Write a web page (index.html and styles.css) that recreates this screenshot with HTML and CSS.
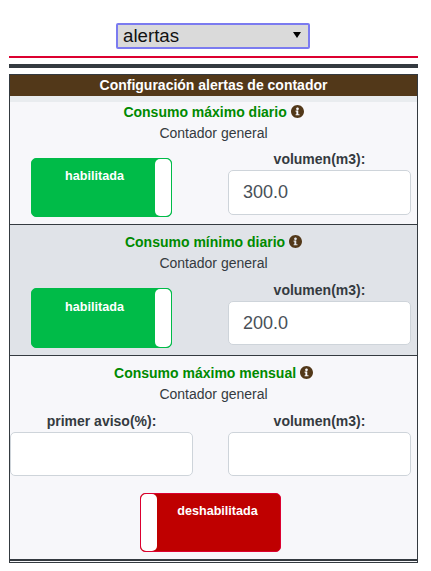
FILE: index.html
```html
<!DOCTYPE html>
<html lang="es">
<head>
    <meta charset="UTF-8">
    <meta name="viewport" content="width=device-width, initial-scale=1.0">
    <title>Alertas</title>
    <link rel="stylesheet" href="styles.css">
</head>
<body>
    <svg class="icon-defs" width="0" height="0">
        <symbol id="info" viewBox="0 0 512 512">
            <path fill-rule="evenodd" d="M256 0C115 0 0 115 0 256s115 256 256 256 256-115 256-256S397 0 256 0zm0 96c31 0 54 24 54 54s-23 54-54 54-54-24-54-54 23-54 54-54zm78 312H182v-46h30v-96h-30v-46h104v142h48v46z"/>
        </symbol>
    </svg>

    <div class="selector">
        <div class="menu-wrap">
            <select class="menu" title="Menu">
                <option>alertas</option>
            </select>
            <span class="menu-arrow"></span>
        </div>
    </div>
    <hr class="line-red">
    <hr class="line-dark">

    <div class="panel">
        <div class="panel-title">Configuración alertas de contador</div>
        <div class="panel-gap"></div>

        <!-- Consumo maximo diario -->
        <section class="alert first">
            <h3 class="alert-title">Consumo máximo diario <svg class="info"><use href="#info"></use></svg></h3>
            <p class="alert-sub">Contador general</p>
            <div class="fields">
                <div class="field switch-cell">
                    <div class="switch on">
                        <span class="switch-text">habilitada</span>
                        <span class="switch-handle"></span>
                    </div>
                </div>
                <div class="field">
                    <label class="field-label" for="vol1">volumen(m3):</label>
                    <input class="field-input" id="vol1" type="text" value="300.0">
                </div>
            </div>
        </section>

        <!-- Consumo minimo diario -->
        <section class="alert alt">
            <h3 class="alert-title">Consumo mínimo diario <svg class="info"><use href="#info"></use></svg></h3>
            <p class="alert-sub">Contador general</p>
            <div class="fields">
                <div class="field switch-cell">
                    <div class="switch on">
                        <span class="switch-text">habilitada</span>
                        <span class="switch-handle"></span>
                    </div>
                </div>
                <div class="field">
                    <label class="field-label" for="vol2">volumen(m3):</label>
                    <input class="field-input" id="vol2" type="text" value="200.0">
                </div>
            </div>
        </section>

        <!-- Consumo maximo mensual -->
        <section class="alert last">
            <h3 class="alert-title">Consumo máximo mensual <svg class="info"><use href="#info"></use></svg></h3>
            <p class="alert-sub">Contador general</p>
            <div class="fields">
                <div class="field">
                    <label class="field-label" for="aviso3">primer aviso(%):</label>
                    <input class="field-input" id="aviso3" type="text">
                </div>
                <div class="field">
                    <label class="field-label" for="vol3">volumen(m3):</label>
                    <input class="field-input" id="vol3" type="text">
                </div>
            </div>
            <div class="switch-row">
                <div class="switch off">
                    <span class="switch-handle"></span>
                    <span class="switch-text">deshabilitada</span>
                </div>
            </div>
        </section>
    </div>
</body>
</html>
```

FILE: styles.css
```css
/* Page */
body {
    margin: 0;
    padding: 0 13px 0 9px;
    font-family: "Liberation Sans", Arial, sans-serif;
    color: #343a40;
    background-color: #fff;
}

.icon-defs {
    position: absolute;
}

/* Top selector */
.selector {
    display: flex;
    justify-content: center;
    padding-top: 23px;
    padding-right: 1px;
}

.menu-wrap {
    position: relative;
    height: 26px;
}

.menu {
    display: block;
    width: 194px;
    height: 26px;
    padding: 0 0 2px 5px;
    font-family: inherit;
    font-size: 18.7px;
    color: #111;
    background-color: #dadada;
    border: 2px solid #7b7bf0;
    border-radius: 2px;
    box-sizing: border-box;
    appearance: none;
}

.menu-arrow {
    position: absolute;
    top: 9px;
    right: 9px;
    border-top: 6px solid #000;
    border-left: 4px solid transparent;
    border-right: 4px solid transparent;
}

/* Separators */
hr {
    margin: 0;
    border: none;
}

.line-red {
    height: 2px;
    margin-top: 7px;
    background-color: #dc0030;
}

.line-dark {
    height: 4px;
    margin-top: 6px;
    background-color: #343a40;
}

/* Panel */
.panel {
    margin-top: 6px;
    padding-bottom: 1px;
    background-color: #f7f7fa;
    border: 1px solid #343a40;
}

.panel-title {
    height: 21px;
    line-height: 21px;
    text-align: center;
    font-size: 14px;
    font-weight: bold;
    color: #fff;
    background-color: #523819;
}

.panel-gap {
    height: 6px;
    background-color: #e9ecef;
}

/* Alert blocks */
.alert {
    padding-top: 7px;
    padding-bottom: 7px;
    background-color: #f7f7fa;
    border-bottom: 1px solid #343a40;
}

.alert.first {
    padding-top: 0;
}

.alert.alt {
    background-color: #e0e3e8;
}

.alert.last {
    border-bottom-width: 2px;
}

.alert-title {
    margin: 0;
    height: 21px;
    line-height: 21px;
    text-align: center;
    font-size: 14px;
    font-weight: bold;
    color: #008a00;
}

.info {
    width: 13px;
    height: 13px;
    vertical-align: -1px;
    fill: #523819;
}

.alert-sub {
    margin: 0;
    height: 21px;
    line-height: 21px;
    text-align: center;
    font-size: 14px;
}

/* Two column row */
.fields {
    display: grid;
    grid-template-columns: 183px 183px;
    column-gap: 35px;
    padding-top: 5px;
}

.first .fields {
    padding-top: 4px;
}

.field {
    display: flex;
    flex-direction: column;
    align-items: center;
}

.field-label {
    height: 22px;
    line-height: 22px;
    font-size: 14px;
    font-weight: bold;
}

.field-input {
    width: 100%;
    height: 44px;
    padding: 0 14px;
    font-family: inherit;
    font-size: 18px;
    color: #495057;
    background-color: #fff;
    border: 1px solid #ced4da;
    border-radius: 5px;
    box-sizing: border-box;
}

.first .field-input {
    height: 45px;
}

/* Toggle switches */
.switch-cell {
    align-items: flex-start;
    padding-top: 9px;
    padding-left: 21px;
}

.first .switch-cell {
    padding-top: 10px;
}

.alt .switch {
    height: 60px;
}

.switch-row {
    display: flex;
    justify-content: center;
    padding: 17px 6px 0 0;
}

.switch {
    display: flex;
    width: 141px;
    height: 59px;
    font-size: 12.6px;
    font-weight: bold;
    color: #fff;
    border-radius: 5px;
    box-sizing: border-box;
}

.switch.on {
    background-color: #00bb48;
    border: 1px solid #00bb48;
}

.switch.off {
    background-color: #bf0000;
    border: 1px solid #dc0030;
}

.switch-text {
    flex: 1;
    padding-top: 10px;
    text-align: center;
}

.switch.on .switch-text {
    padding-left: 2px;
}

.switch.off .switch-text {
    padding-right: 2px;
}

.alt .switch-text {
    padding-top: 11px;
}

.switch-handle {
    width: 16px;
    background-color: #fff;
    border-radius: 5px;
}
```
